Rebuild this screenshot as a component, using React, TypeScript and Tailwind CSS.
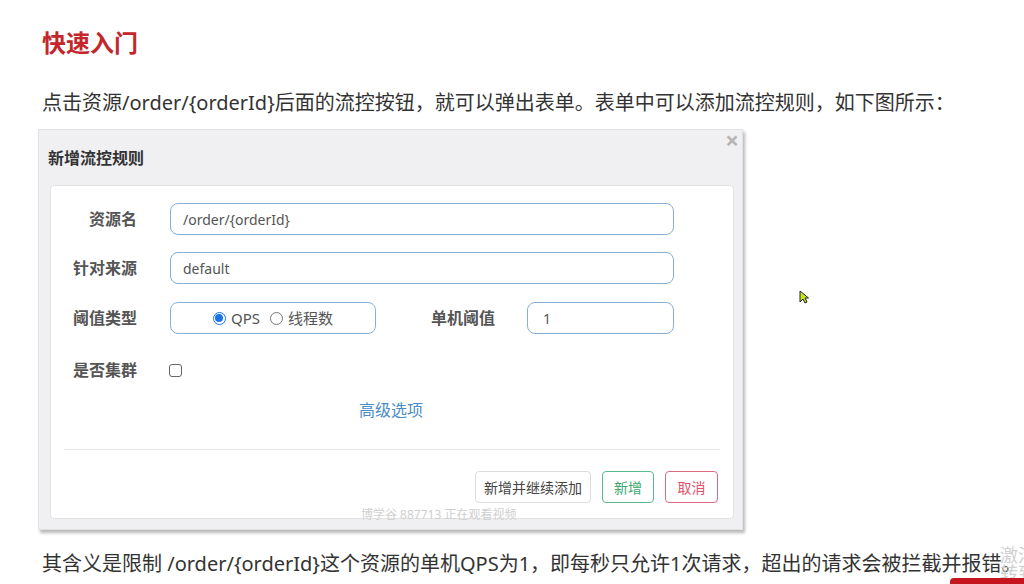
export default function App() {
  return (
    <div
      className="relative w-[1024px] h-[584px] overflow-hidden bg-white text-[#333]"
      style={{ fontFamily: '"Noto Sans", "Noto Sans CJK SC", sans-serif' }}
    >
      {/* 标题 */}
      <h2 className="ml-[42px] pt-[27px] text-[24px] leading-[32px] font-semibold text-[#c3272b]">快速入门</h2>

      <p className="ml-[42px] mt-[30px] text-[20px] leading-[28px] whitespace-nowrap text-[#333]">
        点击资源/order/{'{orderId}'}后面的流控按钮，就可以弹出表单。表单中可以添加流控规则，如下图所示：
      </p>

      {/* 弹窗截图 */}
      <div className="relative ml-[38px] mt-[12px] w-[705px] border border-[#e2e1e4] bg-[#f0eff2] shadow-[2px_3px_3px_rgba(0,0,0,0.28)] pb-[10px]">
        <div className="flex h-[55px] items-center px-[9px]">
          <span className="text-[16px] font-bold text-[#333]">新增流控规则</span>
        </div>
        <span className="absolute right-[3px] top-[0px] text-[24px] leading-[20px] font-bold text-[#b5b5b5]">×</span>

        <div className="ml-[11px] mr-[8px] rounded-[4px] border border-[#e4e4e6] bg-white pt-[17px] pb-[15px]">
          {/* 资源名 */}
          <div className="flex items-center">
            <label className="w-[86px] text-right text-[16px] font-bold text-[#555]">资源名</label>
            <div className="ml-[33px] flex h-[32px] w-[504px] items-center rounded-[8px] border border-[#86afd6] px-[12px] text-[14px] text-[#555]">
              /order/{'{orderId}'}
            </div>
          </div>

          {/* 针对来源 */}
          <div className="mt-[17px] flex items-center">
            <label className="w-[86px] text-right text-[16px] font-bold text-[#555]">针对来源</label>
            <div className="ml-[33px] flex h-[32px] w-[504px] items-center rounded-[8px] border border-[#86afd6] px-[12px] text-[14px] text-[#555]">
              default
            </div>
          </div>

          {/* 阈值类型 */}
          <div className="mt-[18px] flex items-center">
            <label className="w-[86px] text-right text-[16px] font-bold text-[#555]">阈值类型</label>
            <div className="ml-[33px] flex h-[32px] w-[206px] items-center justify-center gap-[10px] rounded-[8px] border border-[#86afd6] text-[15px] text-[#555]">
              <span className="flex items-center gap-[5px]">
                <span className="flex h-[13px] w-[13px] items-center justify-center rounded-full border border-[#1a73e8]">
                  <span className="h-[8px] w-[8px] rounded-full bg-[#1a73e8]" />
                </span>
                QPS
              </span>
              <span className="flex items-center gap-[5px]">
                <span className="h-[13px] w-[13px] rounded-full border border-[#777]" />
                线程数
              </span>
            </div>
            <label className="ml-[55px] w-[65px] text-[16px] font-bold text-[#555]">单机阈值</label>
            <div className="ml-[31px] flex h-[32px] w-[147px] items-center rounded-[8px] border border-[#86afd6] px-[15px] text-[14px] text-[#555]">
              1
            </div>
          </div>

          {/* 是否集群 */}
          <div className="mt-[20px] flex h-[32px] items-center">
            <label className="w-[86px] text-right text-[16px] font-bold text-[#555]">是否集群</label>
            <span className="ml-[32px] h-[13px] w-[13px] rounded-[3px] border border-[#666]" />
          </div>

          <div className="mt-[14px] flex h-[20px] items-center pl-[308px] text-[16px] text-[#4a8cc4]">高级选项</div>

          <div className="mx-[13px] mt-[29px] h-px bg-[#e8e8e8]" />

          <div className="mt-[21px] flex justify-end gap-[11px] pr-[15px]">
            <button className="h-[32px] w-[116px] rounded-[4px] border border-[#dcdcdc] bg-white text-[14px] text-[#444]">
              新增并继续添加
            </button>
            <button className="h-[32px] w-[52px] rounded-[4px] border border-[#5cb98d] bg-white text-[14px] text-[#3aa86f]">
              新增
            </button>
            <button className="h-[32px] w-[53px] rounded-[4px] border border-[#db6b7f] bg-white text-[14px] text-[#e0526a]">
              取消
            </button>
          </div>
        </div>

        {/* 水印 */}
        <span className="absolute left-[322px] bottom-[5px] text-[12px] text-[#cfcfcf]">博学谷 887713 正在观看视频</span>
      </div>

      <p className="ml-[42px] mt-[20px] text-[20px] leading-[28px] whitespace-nowrap text-[#333]">
        其含义是限制 /order/{'{orderId}'}这个资源的单机QPS为1，即每秒只允许1次请求，超出的请求会被拦截并报错。
      </p>

      {/* 鼠标指针 */}
      <svg className="absolute left-[799px] top-[290px]" width="10" height="14" viewBox="0 0 10 14">
        <path d="M1 1 L1 12 L4 9 L6 13 L8 12 L6 8 L9.5 8 Z" fill="#c8e61e" stroke="#222" strokeWidth="1" />
      </svg>

      {/* 右下角 */}
      <div className="absolute right-[-12px] bottom-[20px] text-[18px] leading-[18px] text-[#d0d0d0]">激活</div>
      <div className="absolute right-[-12px] bottom-[2px] text-[18px] leading-[18px] text-[#d0d0d0]">转到</div>
      <div className="absolute right-0 bottom-0 h-[6px] w-[74px] rounded-tl-[4px] bg-[#c4161c]" />
    </div>
  )
}
